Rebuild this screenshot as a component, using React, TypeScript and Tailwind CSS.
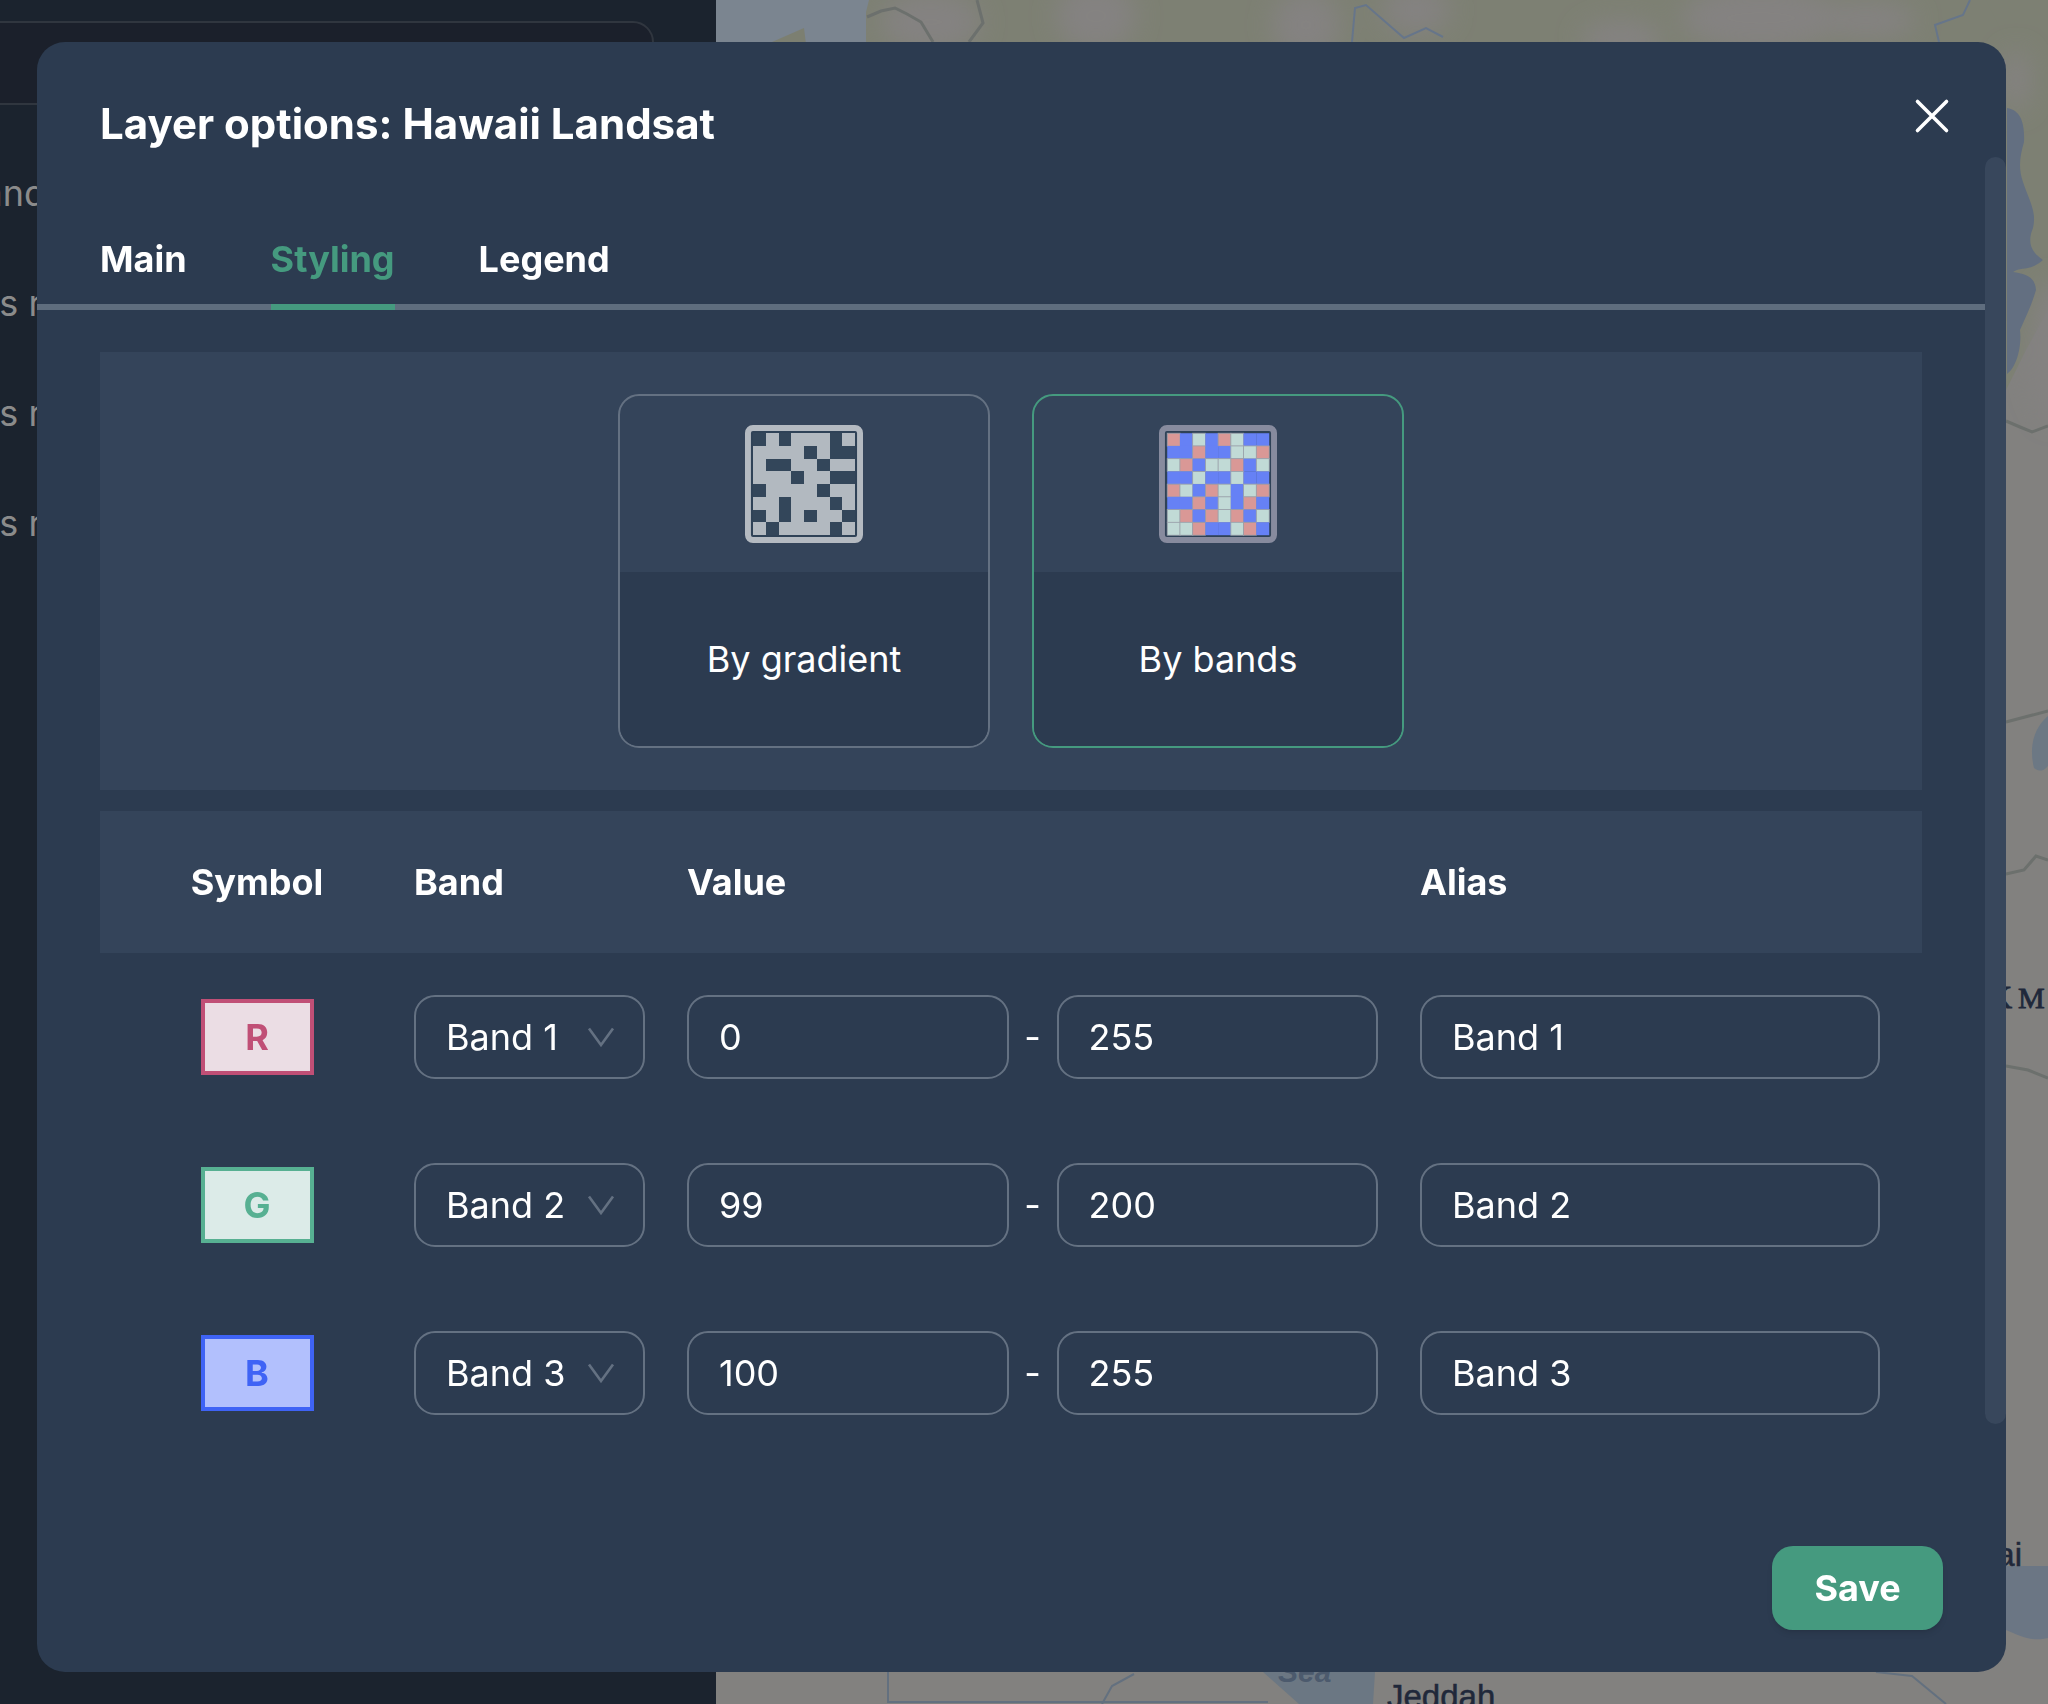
import { useState } from "react";

const BANDS = ["Band 1", "Band 2", "Band 3"];

const ROWS = [
  {
    symbol: "R",
    band: "Band 1",
    min: "0",
    max: "255",
    swatch: "border-[#c04f76] bg-[#ebdde4] text-[#c04f76]",
  },
  {
    symbol: "G",
    band: "Band 2",
    min: "99",
    max: "200",
    swatch: "border-[#57b092] bg-[#dcebe8] text-[#57b092]",
  },
  {
    symbol: "B",
    band: "Band 3",
    min: "100",
    max: "255",
    swatch: "border-[#3f63f5] bg-[#b2c0fd] text-[#3f63f5]",
  },
];

const GRADIENT_CELLS = [
  "01011101",
  "11110100",
  "10011011",
  "11101100",
  "01111011",
  "11011101",
  "01010110",
  "10111101",
];

const BAND_CELLS = [
  "RBGBRGBB",
  "BBRBBGGR",
  "GRBGGRBG",
  "BBGBBGBB",
  "RGBRGBGR",
  "BBRBGBRB",
  "GRBRGRBG",
  "GGRBBGRB",
];

const CELL_COLORS: Record<string, string> = {
  "0": "#33465a",
  "1": "#b2b9c0",
  R: "#d99896",
  G: "#c1dad6",
  B: "#6681f5",
};

const CELL = 12.83;

function RasterIcon({ cells, frame, lines }: { cells: string[]; frame: string; lines?: boolean }) {
  return (
    <svg viewBox="0 0 119 119" className="size-[118px]" aria-hidden="true">
      <rect x="3" y="3" width="113" height="113" rx="5" fill="#2f4257" stroke={frame} strokeWidth="6" />
      <g shapeRendering={lines ? "auto" : "crispEdges"}>
        {cells.map((row, y) =>
          row.split("").map((c, x) => (
            <rect
              key={`${x}-${y}`}
              x={8.3 + x * CELL}
              y={8.3 + y * CELL}
              width={CELL + 0.2}
              height={CELL + 0.2}
              fill={CELL_COLORS[c]}
              stroke={lines && c !== "B" ? "#9aa0aa" : "none"}
              strokeWidth="0.8"
            />
          ))
        )}
      </g>
    </svg>
  );
}

function MapBackdrop() {
  return (
    <svg
      viewBox="0 0 1332 1704"
      preserveAspectRatio="xMinYMin slice"
      className="h-full w-full"
      aria-hidden="true"
    >
      <defs>
        <filter id="soft" x="-20%" y="-20%" width="140%" height="140%">
          <feGaussianBlur stdDeviation="12" />
        </filter>
      </defs>
      <rect width="1332" height="1704" fill="#82817f" />
      <rect width="1332" height="60" fill="#7d8073" />
      <path d="M1270 0h62v310l-22 40-20 40V40z" fill="#7d8073" />
      <g fill="#848281" filter="url(#soft)">
        <ellipse cx="215" cy="22" rx="50" ry="30" />
        <ellipse cx="380" cy="16" rx="40" ry="34" />
        <ellipse cx="590" cy="25" rx="34" ry="34" />
        <ellipse cx="700" cy="10" rx="34" ry="24" />
        <ellipse cx="905" cy="40" rx="40" ry="20" />
        <ellipse cx="1045" cy="18" rx="80" ry="32" />
        <ellipse cx="1150" cy="20" rx="50" ry="18" />
        <ellipse cx="1300" cy="80" rx="14" ry="30" />
        <ellipse cx="1340" cy="350" rx="26" ry="70" />
      </g>
      <path d="M0 0h153l-3 12v34H0z" fill="#7b8590" />
      <path d="M56 42l32-14 2 16z" fill="#7c7f71" />
      <g fill="none" stroke="#6c706d" strokeWidth="3">
        <path d="M151 17l14-6 14-3 12 6 14 8 12 20M261 0l6 23-14 19" />
        <path d="M1290 421l14 6 12 5 16-6M1290 722l42-11M1290 874l18-4 12-14 12 4M1290 1066l22 4 20 8" />
      </g>
      <g fill="none" stroke="#66758a" strokeWidth="2">
        <path d="M636 42l3-34 11-3 38 33 22-10 17 9M1254 0l-7 15-28 10 4 17" />
      </g>
      <path
        d="M1291 108c14 2 18 16 17 34-4 14-6 26-1 40 6 18 14 30 10 46-6 14-2 24 10 32-14 12-22 6-30 12 12 2 22 4 23 18-4 14-10 26-16 40 2 18-4 38-13 44z"
        fill="#636f81"
      />
      <path d="M1332 716c-12 10-20 28-14 52 8 6 12 0 14-2z" fill="#6c7884" />
      <path d="M1290 1566h42v72c-16 4-28-2-42-8z" fill="#6b7684" />
      <path d="M547 1672h112l-2 32h-74z" fill="#6b7783" />
      <g fill="none" stroke="#63707f" strokeWidth="2">
        <path d="M172 1670v32h380M418 1674l-22 12-10 18M1160 1672l36 4 34 28" />
      </g>
      <g fill="#20283a" stroke="#20283a" strokeWidth="0.8" className="font-['Liberation_Serif',serif]">
        <text x="1296" y="1008" textAnchor="end" fontSize="32">
          K
        </text>
        <text x="1302" y="1008" fontSize="30">
          M
        </text>
      </g>
      <g fill="#20283a" stroke="#20283a" strokeWidth="0.5" className="font-['Liberation_Sans',sans-serif]">
        <text x="1306" y="1566" textAnchor="end" fontSize="33">
          ai
        </text>
        <text x="671" y="1708" fontSize="33">
          Jeddah
        </text>
      </g>
      <text x="562" y="1682" fontSize="30" fontStyle="italic" fontWeight="600" fill="#4c5a6d" className="font-['Liberation_Sans',sans-serif]">
        Sea
      </text>
    </svg>
  );
}

function Backdrop() {
  return (
    <div className="fixed inset-0 flex">
      <div className="w-[716px] shrink-0 overflow-hidden bg-[#1b232e]">
        <div className="mt-[21px] -ml-8 h-[84px] w-[686px] rounded-[21px] border-2 border-[#30363f] bg-[#1b202b]" />
        <ul className="mt-16 flex flex-col gap-[62px] text-4xl/[48px] whitespace-nowrap text-[#8b8b8b]">
          <li className="flex w-[46px] justify-end">land</li>
          <li className="flex w-[42px] justify-end">s r</li>
          <li className="flex w-[42px] justify-end">s r</li>
          <li className="flex w-[42px] justify-end">s r</li>
        </ul>
      </div>
      <div className="min-w-0 flex-1">
        <MapBackdrop />
      </div>
    </div>
  );
}

const TABS = ["Main", "Styling", "Legend"];

const field =
  "h-[84px] w-full min-w-0 rounded-[21px] border-2 border-[#647182] bg-transparent px-[30px] text-white outline-none";

function App() {
  const [tab, setTab] = useState("Styling");
  const [mode, setMode] = useState("bands");

  return (
    <div className="flex min-h-screen pt-[42px] pr-[42px] pb-8 pl-[37px] font-[Inter,'Noto_Sans',sans-serif] text-4xl/[48px] text-white">
      <Backdrop />

      <div
        role="dialog"
        aria-labelledby="dialog-title"
        className="relative flex min-w-0 flex-1 flex-col overflow-hidden rounded-[28px] bg-[#2c3b50]"
      >
        {/* Header */}
        <div className="flex h-[115px] shrink-0 items-start justify-between pr-14 pl-[63px]">
          <h1 id="dialog-title" className="pt-[58px] text-[42px]/[48px] font-bold">
            Layer options: Hawaii Landsat
          </h1>
          <button type="button" aria-label="Close" className="mt-14">
            <svg viewBox="0 0 36 36" className="size-9" fill="none" stroke="currentColor" strokeWidth="3.6" strokeLinecap="round">
              <path d="M3.5 3.5l29 29M32.5 3.5l-29 29" />
            </svg>
          </button>
        </div>

        <div className="flex flex-1">
          <div className="min-w-0 flex-1">
            {/* Tabs */}
            <div role="tablist" className="flex gap-[84px] border-b-6 border-[#5f6d7e] pt-[78px] pl-[63px] font-bold">
              {TABS.map((t) => (
                <button
                  key={t}
                  type="button"
                  role="tab"
                  aria-selected={tab === t}
                  onClick={() => setTab(t)}
                  className={
                    tab === t
                      ? "-mb-1.5 border-b-6 border-[#459a7f] pb-[21px] text-[#459a7f]"
                      : "-mb-1.5 border-b-6 border-transparent pb-[21px]"
                  }
                >
                  {t}
                </button>
              ))}
            </div>

            <div className="flex flex-col gap-[21px] px-[63px] pt-[42px]">
              {/* Styling mode */}
              <div className="flex justify-center gap-[42px] bg-[#34445a] p-[42px]">
                {[
                  { id: "gradient", label: "By gradient" },
                  { id: "bands", label: "By bands" },
                ].map(({ id, label }) => (
                  <button
                    key={id}
                    type="button"
                    aria-pressed={mode === id}
                    onClick={() => setMode(id)}
                    className={`flex h-[354px] w-[372px] flex-col overflow-hidden rounded-[21px] border-2 ${
                      mode === id ? "border-[#459a7f]" : "border-[#647182]"
                    }`}
                  >
                    <span className="flex h-44 w-full items-center justify-center">
                      {id === "gradient" ? (
                        <RasterIcon cells={GRADIENT_CELLS} frame="#b4bac1" />
                      ) : (
                        <RasterIcon cells={BAND_CELLS} frame="#878b9e" lines />
                      )}
                    </span>
                    <span className="flex w-full flex-1 items-center justify-center bg-[#2c3b50]">{label}</span>
                  </button>
                ))}
              </div>

              {/* Bands */}
              <table className="w-full table-fixed">
                <colgroup>
                  <col className="w-[293px]" />
                  <col className="w-[273px]" />
                  <col />
                  <col className="w-[523px]" />
                </colgroup>
                <thead>
                  <tr className="h-[142px] bg-[#34445a] text-left">
                    <th className="pr-[21px] pl-[42px] text-center font-bold">Symbol</th>
                    <th className="px-[21px] font-bold">Band</th>
                    <th className="px-[21px] font-bold">Value</th>
                    <th className="px-[21px] font-bold">Alias</th>
                  </tr>
                </thead>
                <tbody>
                  {ROWS.map((row) => (
                    <tr key={row.symbol} className="h-[168px]">
                      <td className="pr-[21px] pl-[42px]">
                        <div
                          className={`mx-auto flex h-[76px] w-[113px] items-center justify-center border-4 font-bold ${row.swatch}`}
                        >
                          {row.symbol}
                        </div>
                      </td>
                      <td className="px-[21px]">
                        <div className="relative">
                          <select
                            aria-label={`${row.symbol} band`}
                            defaultValue={row.band}
                            className={`${field} appearance-none`}
                          >
                            {BANDS.map((b) => (
                              <option key={b}>{b}</option>
                            ))}
                          </select>
                          <svg
                            viewBox="0 0 28 20"
                            className="pointer-events-none absolute top-8 right-[30px] h-5 w-7"
                            fill="none"
                            stroke="#647182"
                            strokeWidth="2.6"
                          >
                            <path d="M2 1.5L14 18 26 1.5" />
                          </svg>
                        </div>
                      </td>
                      <td className="px-[21px]">
                        <div className="flex items-center">
                          <input aria-label={`${row.symbol} minimum`} defaultValue={row.min} className={field} />
                          <span className="w-12 shrink-0 text-center">-</span>
                          <input aria-label={`${row.symbol} maximum`} defaultValue={row.max} className={field} />
                        </div>
                      </td>
                      <td className="pr-[42px] pl-[21px]">
                        <input aria-label={`${row.symbol} alias`} defaultValue={row.band} className={field} />
                      </td>
                    </tr>
                  ))}
                </tbody>
              </table>
            </div>
          </div>

          {/* Scrollbar */}
          <div className="h-[1267px] w-[21px] rounded-full bg-[#38475c]" />
        </div>

        {/* Footer */}
        <div className="flex justify-end px-[63px] pb-[42px]">
          <button type="button" className="h-[84px] w-[171px] rounded-[21px] bg-[#459a7f] font-bold shadow-md">
            Save
          </button>
        </div>
      </div>
    </div>
  );
}

export default App;
